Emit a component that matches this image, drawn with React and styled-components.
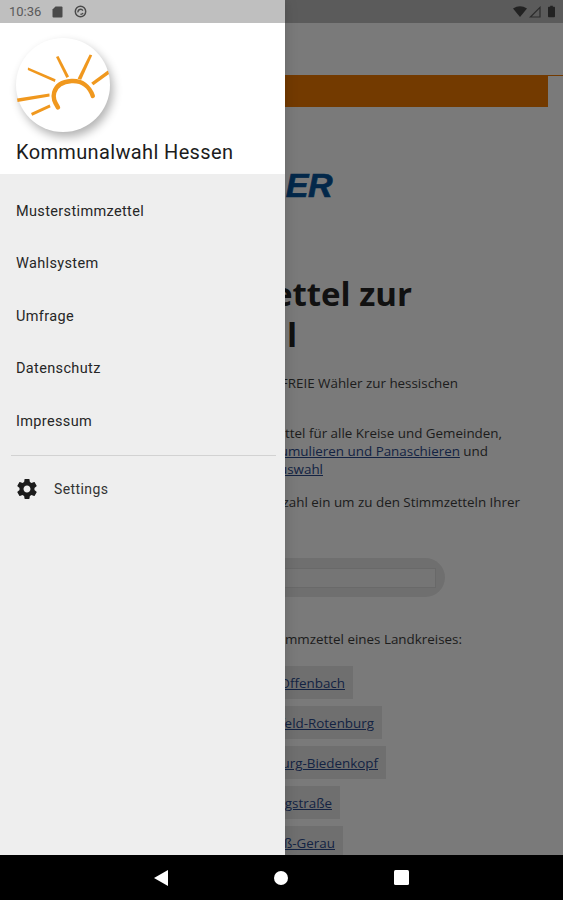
import React from "react";
import styled, { createGlobalStyle } from "styled-components";

const Global = createGlobalStyle`
  html, body { margin: 0; padding: 0; background: #000; }
  #root { width: 563px; height: 900px; }
  * { box-sizing: border-box; }
`;

const Screen = styled.div`
  position: relative;
  width: 563px;
  height: 900px;
  overflow: hidden;
  display: flex;
  flex-direction: column;
  background: #fff;
`;

const Page = styled.main`
  flex: 1;
  min-height: 0;
  overflow: hidden;
  background: #fff;
  display: flex;
  flex-direction: column;
  font-family: "Open Sans", "Noto Sans", sans-serif;
  color: #3e3e3e;
`;

const TopRule = styled.div`
  flex: none;
  height: 76px;
  border-bottom: 1px solid #f07900;
`;

const OrangeBar = styled.div`
  flex: none;
  width: 548px;
  height: 31px;
  background: #f07900;
`;

const Row = styled.div`
  flex: none;
  width: ${(p) => p.$end}px;
  margin-top: ${(p) => p.$top || 0}px;
  display: flex;
  justify-content: flex-end;
  white-space: nowrap;
`;

const Logo = styled(Row)`
  height: 30px;
  font: italic 700 34px/30px "Liberation Sans", sans-serif;
  color: #08559c;
  letter-spacing: -0.5px;
  -webkit-text-stroke: 0.7px #08559c;
`;

const Heading = styled(Row)`
  height: 41px;
  font-size: 33px;
  line-height: 41px;
  font-weight: 700;
  color: #242424;
`;

const TextLine = styled(Row)`
  height: 18px;
  font-size: 13.4px;
  line-height: 18px;
`;

const TextLink = styled.a`
  color: #2b4a8c;
  text-decoration: underline;
`;

const SearchRing = styled.div`
  flex: none;
  width: 445px;
  height: 39px;
  margin-top: 47px;
  padding: 10px 9px 9px 0;
  background: #e9e9e9;
  border-radius: 0 20px 20px 0;
`;

const SearchInput = styled.div`
  height: 20px;
  background: #f4f4f4;
  border: 1px solid #dcdcdc;
`;

const LinkList = styled.div`
  flex: none;
  margin-top: 18px;
  display: flex;
  flex-direction: column;
  gap: 7px;
`;

const LinkChip = styled(Row)`
  height: 33px;
  align-items: center;
  padding-right: 8px;
  background: #e9e9e9;
  font-size: 13.4px;
`;

const Scrim = styled.div`
  position: absolute;
  inset: 0 0 45px 0;
  background: rgba(0, 0, 0, 0.52);
`;

const Drawer = styled.aside`
  position: absolute;
  left: 0;
  top: 0;
  bottom: 45px;
  width: 285px;
  background: #eeeeee;
  display: flex;
  flex-direction: column;
  box-shadow: 0 0 12px rgba(0, 0, 0, 0.18);
  font-family: Roboto, sans-serif;
`;

const DrawerHeader = styled.header`
  flex: none;
  height: 174px;
  padding: 38px 0 0 16px;
  background: #fff;
`;

const Avatar = styled.div`
  width: 94px;
  height: 94px;
  border-radius: 50%;
  background: #fff;
  box-shadow: 3px 5px 10px rgba(0, 0, 0, 0.3);
`;

const Title = styled.h1`
  margin: 7px 0 0;
  font-size: 20px;
  line-height: 26px;
  font-weight: 400;
  letter-spacing: 0.36px;
  color: #1c1c1c;
`;

const Menu = styled.nav`
  flex: none;
  padding-top: 11px;
  display: flex;
  flex-direction: column;
`;

const MenuItem = styled.div`
  height: 52.5px;
  padding-left: 16px;
  display: flex;
  align-items: center;
  font-size: 14.5px;
  font-weight: 400;
  letter-spacing: 0.35px;
  color: #262626;
`;

const Divider = styled.hr`
  flex: none;
  margin: 7px 9px 0 11px;
  border: 0;
  height: 1px;
  background: #d2d2d2;
`;

const SettingsRow = styled.div`
  height: 66px;
  padding-left: 15px;
  display: flex;
  align-items: center;
  gap: 15px;
  font-size: 14px;
  font-weight: 400;
  letter-spacing: 0.4px;
  color: #333;
`;

const StatusBar = styled.div`
  position: absolute;
  left: 0;
  top: 0;
  width: 563px;
  height: 23px;
  padding: 0 8px 0 9px;
  background: rgba(0, 0, 0, 0.25);
  display: flex;
  align-items: center;
  gap: 11px;
  font: 400 13px Roboto, sans-serif;
  color: #5a5a5a;
`;

const StatusRight = styled.div`
  margin-left: auto;
  display: flex;
  align-items: center;
  gap: 2px;
`;

const BatterySlot = styled.div`
  display: flex;
  margin-left: 5px;
`;

const NavBar = styled.footer`
  flex: none;
  height: 45px;
  background: #000;
  display: flex;
  align-items: center;
  justify-content: center;
  gap: 106px;
`;

const SunStroke = ({ d }) => <path d={d} fill="#f0981e" />;

const Sun = () => (
  <svg width="94" height="94" viewBox="0 0 94 94">
    <SunStroke d="M12 29.5 L39.6 41.2 L38.8 44 L11.8 32 Z" />
    <SunStroke d="M40 19 L42.5 18 L53 38.5 L50.4 40 Z" />
    <SunStroke d="M73.6 16.5 L76.2 17.2 L65.2 41.8 L61.6 40.8 Z" />
    <SunStroke d="M91.8 32.6 L93 36 L77.4 47.2 L75.2 44.8 Z" />
    <SunStroke d="M1 60.4 L33.4 55.4 L33.6 58.6 L1.6 64 Z" />
    <SunStroke d="M15 75 L33.6 66.4 L34.6 69.2 L16.2 77.8 Z" />
    <path
      d="M42 69.5 C38.6 64 36.6 60 38.2 54.4 C40.4 46.8 47 43.6 55.4 43 C66 42.4 73.6 48.4 76.8 58"
      fill="none"
      stroke="#f0981e"
      strokeWidth="4.4"
      strokeLinecap="round"
    />
  </svg>
);

const Gear = () => (
  <svg width="24" height="24" viewBox="0 0 24 24" fill="#1b1b1b">
    <path
      fillRule="evenodd"
      d="M19.43 12.98c.04-.32.07-.64.07-.98s-.03-.66-.07-.98l2.11-1.65c.19-.15.24-.42.12-.64l-2-3.46c-.12-.22-.39-.3-.61-.22l-2.49 1c-.52-.4-1.08-.73-1.69-.98l-.38-2.65C14.46 2.18 14.25 2 14 2h-4c-.25 0-.46.18-.49.42l-.38 2.65c-.61.25-1.17.59-1.69.98l-2.49-1c-.23-.09-.49 0-.61.22l-2 3.46c-.13.22-.07.49.12.64l2.11 1.65c-.04.32-.07.65-.07.98s.03.66.07.98l-2.11 1.65c-.19.15-.24.42-.12.64l2 3.46c.12.22.39.3.61.22l2.49-1c.52.4 1.08.73 1.69.98l.38 2.65c.03.24.24.42.49.42h4c.25 0 .46-.18.49-.42l.38-2.65c.61-.25 1.17-.59 1.69-.98l2.49 1c.23.09.49 0 .61-.22l2-3.46c.12-.22.07-.49-.12-.64l-2.11-1.65zM12 15.5c-1.93 0-3.5-1.57-3.5-3.5s1.57-3.5 3.5-3.5 3.5 1.57 3.5 3.5-1.57 3.5-3.5 3.5z"
    />
  </svg>
);

const SdIcon = () => (
  <svg width="11" height="12" viewBox="0 0 11 12" fill="#4a4a4a">
    <path d="M3.5 0.5 H9.5 Q10.5 0.5 10.5 1.5 V10.5 Q10.5 11.5 9.5 11.5 H1.5 Q0.5 11.5 0.5 10.5 V3.5 Z" />
  </svg>
);

const SyncIcon = () => (
  <svg width="13" height="13" viewBox="0 0 14 14" fill="none" stroke="#4a4a4a">
    <circle cx="7" cy="7" r="5.6" strokeWidth="1.6" />
    <path d="M4.3 8 A2.9 2.9 0 0 1 9.6 6 M9.8 8.6 A2.9 2.9 0 0 1 7 10" strokeWidth="1.5" />
  </svg>
);

const WifiIcon = () => (
  <svg width="14" height="11" viewBox="0 0 14 11" fill="#222">
    <path d="M0 2.6 Q7 -2.2 14 2.6 L7 11 Z" />
  </svg>
);

const SignalIcon = () => (
  <svg width="12" height="12" viewBox="0 0 12 12" fill="none" stroke="#2c2c2c" strokeWidth="1.2">
    <path d="M11 1.4 V11 H1.4 Z" />
  </svg>
);

const BatteryIcon = () => (
  <svg width="7" height="13" viewBox="0 0 8 13" fill="#222">
    <path d="M2.5 0 H5.5 V1.2 H7 Q8 1.2 8 2.2 V12 Q8 13 7 13 H1 Q0 13 0 12 V2.2 Q0 1.2 1 1.2 H2.5 Z" />
  </svg>
);

const BackIcon = () => (
  <svg width="14" height="16" viewBox="0 0 14 16" fill="#fff">
    <path d="M14 0 V16 L0 8 Z" />
  </svg>
);
const HomeIcon = () => (
  <svg width="14" height="14" viewBox="0 0 14 14" fill="#fff">
    <circle cx="7" cy="7" r="7" />
  </svg>
);
const RecentIcon = () => (
  <svg width="15" height="15" viewBox="0 0 15 15" fill="#fff">
    <rect width="15" height="15" rx="1.5" />
  </svg>
);

const menu = ["Musterstimmzettel", "Wahlsystem", "Umfrage", "Datenschutz", "Impressum"];
const districts = [
  ["Kreis Offenbach", 353],
  ["Kreis Hersfeld-Rotenburg", 382],
  ["Kreis Marburg-Biedenkopf", 386],
  ["Kreis Bergstraße", 340],
  ["Kreis Groß-Gerau", 343],
];

export default function App() {
  return (
    <Screen>
      <Global />
      <Page>
        <TopRule />
        <OrangeBar />
        <Logo $end={332} $top={63}>FREIE WÄHLER</Logo>
        <Heading $end={412} $top={73}>Musterstimmzettel zur</Heading>
        <Heading $end={297}>Kommunalwahl</Heading>
        <TextLine $end={458} $top={19}>Infoportal der FREIE Wähler zur hessischen</TextLine>
        <TextLine $end={502} $top={32}>Alle Musterstimmzettel für alle Kreise und Gemeinden,</TextLine>
        <TextLine $end={488}>
          <span>Infos zum&nbsp;</span>
          <TextLink>Kumulieren und Panaschieren</TextLink>
          <span>&nbsp;und</span>
        </TextLine>
        <TextLine $end={323}>
          <TextLink>zur Personenauswahl</TextLink>
        </TextLine>
        <TextLine $end={520} $top={15}>Geben Sie Ihre Postleitzahl ein um zu den Stimmzetteln Ihrer</TextLine>
        <SearchRing>
          <SearchInput />
        </SearchRing>
        <TextLine $end={462} $top={33}>Oder wählen Sie die Stimmzettel eines Landkreises:</TextLine>
        <LinkList>
          {districts.map(([name, end]) => (
            <LinkChip key={name} $end={end}>
              <TextLink>{name}</TextLink>
            </LinkChip>
          ))}
        </LinkList>
      </Page>
      <Scrim />
      <Drawer>
        <DrawerHeader>
          <Avatar>
            <Sun />
          </Avatar>
          <Title>Kommunalwahl Hessen</Title>
        </DrawerHeader>
        <Menu>
          {menu.map((item) => (
            <MenuItem key={item}>{item}</MenuItem>
          ))}
        </Menu>
        <Divider />
        <SettingsRow>
          <Gear />
          <span>Settings</span>
        </SettingsRow>
      </Drawer>
      <StatusBar>
        <span>10:36</span>
        <SdIcon />
        <SyncIcon />
        <StatusRight>
          <WifiIcon />
          <SignalIcon />
          <BatterySlot>
            <BatteryIcon />
          </BatterySlot>
        </StatusRight>
      </StatusBar>
      <NavBar>
        <BackIcon />
        <HomeIcon />
        <RecentIcon />
      </NavBar>
    </Screen>
  );
}
